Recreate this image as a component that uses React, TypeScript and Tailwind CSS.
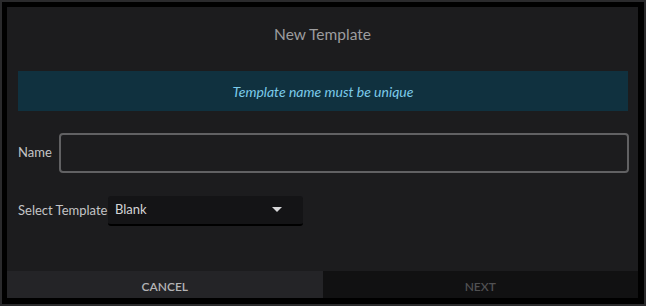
import React from "react";

const font = { fontFamily: "Lato, 'Open Sans', sans-serif" };

export default function App() {
  return (
    <div className="w-[646px] h-[306px] bg-[#2a2a2c] p-[2px]" style={font}>
      <div className="w-full h-full border-[5px] border-r-[6px] border-b-[6px] border-black bg-[#1c1c1e] flex flex-col">
        {/* Header */}
        <div className="h-[56px] flex items-center justify-center pb-[1px]">
          <h1 className="text-[15.5px] text-[#9d9d9f]">New Template</h1>
        </div>

        {/* Notice */}
        <div className="ml-[11px] mr-[10px] h-[40px] bg-[#10313f] flex items-center justify-center mt-[8px]">
          <p className="text-[14px] italic text-[#7ccbea]">Template name must be unique</p>
        </div>

        {/* Form */}
        <div className="flex-1 pl-[11px] pr-[9px]">
          <div className="flex items-center mt-[22px] gap-[6px]">
            <label className="text-[13px] text-[#c4c4c6] w-[35px]">Name</label>
            <input
              className="flex-1 h-[40px] rounded-[4px] border-2 border-[#616163] bg-transparent outline-none px-2 text-[13px] text-white"
              defaultValue=""
            />
          </div>
          <div className="flex items-center mt-[23px]">
            <label className="text-[13px] text-[#c4c4c6] w-[90px]">Select Template</label>
            <div className="w-[195px] h-[30px] bg-[#141416] rounded-[3px] border-b-2 border-black flex items-center justify-between pl-[7px] pr-[21px]">
              <span className="text-[13px] text-[#d4d4d6]">Blank</span>
              <svg width="10" height="6" viewBox="0 0 10 6">
                <path d="M0 0h10L5 5z" fill="#d8d8da" />
              </svg>
            </div>
          </div>
        </div>

        {/* Footer */}
        <div className="h-[27px] flex">
          <button className="flex-1 bg-[#242427] text-[12px] font-semibold text-[#b4b4b6] uppercase pt-[5px]">
            Cancel
          </button>
          <button className="flex-1 bg-[#111112] text-[12px] font-semibold text-[#505052] uppercase pt-[5px]" disabled>
            Next
          </button>
        </div>
      </div>
    </div>
  );
}
